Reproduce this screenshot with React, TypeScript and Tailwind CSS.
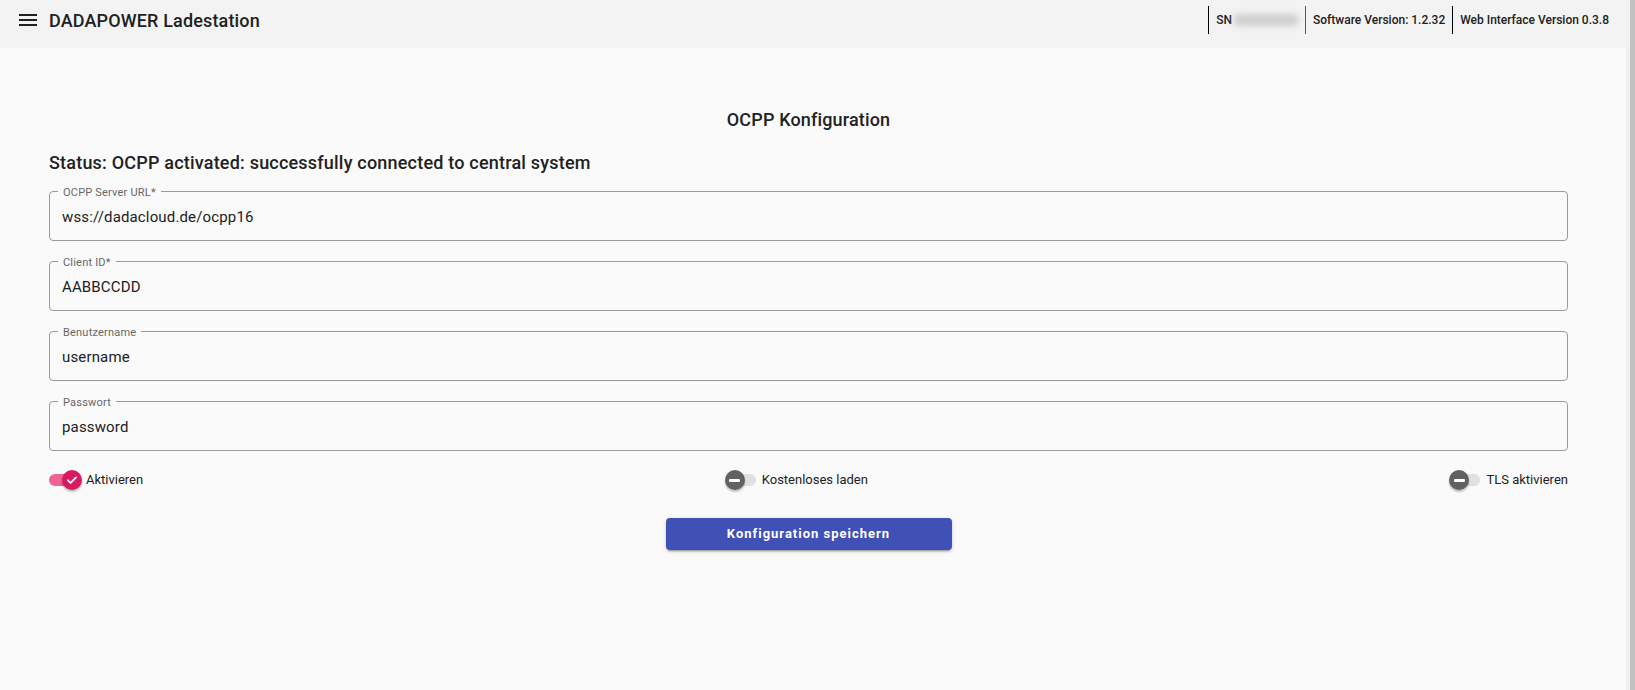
import React from "react";

function MenuIcon() {
  return (
    <svg width="24" height="24" viewBox="0 0 24 24" fill="#212121">
      <path d="M3 18h18v-2H3v2zm0-5h18v-2H3v2zm0-7v2h18V6H3z" />
    </svg>
  );
}

function Switch({ on }: { on: boolean }) {
  return (
    <div className="relative w-[33px] h-[20px] flex items-center">
      <div
        className={
          on
            ? "absolute left-0 w-[26px] h-[12px] rounded-full bg-[#f06292]"
            : "absolute left-[2px] w-[29px] h-[12px] rounded-full bg-[#e0e0e0]"
        }
      />
      <div
        className={
          on
            ? "relative ml-auto w-[20px] h-[20px] rounded-full bg-[#d81b60] flex items-center justify-center shadow-[0_2px_2px_rgba(0,0,0,0.25)]"
            : "relative w-[20px] h-[20px] rounded-full bg-[#616161] flex items-center justify-center shadow-[0_2px_2px_rgba(0,0,0,0.25)]"
        }
      >
        {on ? (
          <svg width="14" height="14" viewBox="0 0 24 24" fill="none" stroke="#fff" strokeWidth="3" strokeLinecap="round" strokeLinejoin="round">
            <path d="M5 12.5l4.5 4.5L19 7.5" />
          </svg>
        ) : (
          <div className="w-[11px] h-[3px] bg-white rounded-[1px]" />
        )}
      </div>
    </div>
  );
}

function Field({ label, value }: { label: string; value: string }) {
  return (
    <fieldset className="border border-[#9a9a9a] rounded-[4px] px-[8px] pt-0 pb-0 m-0 min-w-0">
      <legend className="px-[5px] text-[11px] leading-[12px] text-[#666666] tracking-[0.2px]">
        <span className="relative top-[2px]">{label}</span>
      </legend>
      <div className="pl-[4px] pt-[8px] pb-[11px] h-[43px] text-[15px] leading-[24px] text-[#212121] tracking-[0.15px]">
        {value}
      </div>
    </fieldset>
  );
}

export default function App() {
  return (
    <div className="w-full h-[690px] flex bg-[#fafafa] font-['Roboto',sans-serif] overflow-hidden">
      <div className="flex-1 flex flex-col min-w-0">
        <header className="h-[48px] bg-[#f3f3f3] shrink-0">
          <div className="h-[40px] flex items-center pl-[16px] pr-[17px]">
            <MenuIcon />
            <div className="ml-[9px] text-[18px] font-medium text-[#212121] tracking-[0.15px]">DADAPOWER Ladestation</div>
            <div className="ml-auto flex items-center text-[12px] font-medium text-[#212121]">
              <div className="h-[28px] border-l border-black flex items-center px-[7px]">
                <span>SN</span>
                <span className="ml-[2px] w-[64px] h-[12px] bg-[#cfcfcf] blur-[3px]" />
              </div>
              <div className="h-[28px] border-l border-[#555] flex items-center px-[7px]">Software Version: 1.2.32</div>
              <div className="h-[28px] border-l border-black flex items-center pl-[7px]">Web Interface Version 0.3.8</div>
            </div>
          </div>
        </header>
        <main className="flex-1 pl-[49px] pr-[58px] pt-[58px]">
          <h1 className="text-center text-[18px] leading-[28px] font-medium text-[#212121] tracking-[0.15px]">OCPP Konfiguration</h1>
          <h2 className="mt-[16px] text-[18px] leading-[26px] font-medium text-[#212121] tracking-[0.2px]">
            Status: OCPP activated: successfully connected to central system
          </h2>
          <div className="mt-[9px] flex flex-col gap-[14px]">
            <Field label="OCPP Server URL*" value="wss://dadacloud.de/ocpp16" />
            <Field label="Client ID*" value="AABBCCDD" />
            <Field label="Benutzername" value="username" />
            <Field label="Passwort" value="password" />
          </div>
          <div className="mt-[17px] h-[24px] flex items-center justify-between text-[13px] text-[#212121]">
            <div className="flex items-center gap-[4px]">
              <Switch on={true} />
              <span>Aktivieren</span>
            </div>
            <div className="flex items-center gap-[4px]">
              <Switch on={false} />
              <span>Kostenloses laden</span>
            </div>
            <div className="flex items-center gap-[4px]">
              <Switch on={false} />
              <span>TLS aktivieren</span>
            </div>
          </div>
          <div className="mt-[26px] flex justify-center">
            <button className="w-[286px] h-[32px] rounded-[4px] bg-[#3f51b5] text-white text-[13px] font-bold tracking-[1px] shadow-[0_3px_1px_-2px_rgba(0,0,0,0.2),0_2px_2px_0_rgba(0,0,0,0.14),0_1px_5px_0_rgba(0,0,0,0.12)]">
              Konfiguration speichern
            </button>
          </div>
        </main>
      </div>
      <div className="w-[9px] h-full bg-[#f1f1f1] pl-[4px] shrink-0">
        <div className="w-[5px] h-full bg-[#c1c1c1]" />
      </div>
    </div>
  );
}
